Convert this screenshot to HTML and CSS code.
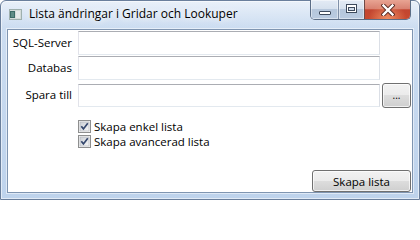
FILE: index.html
```html
<!DOCTYPE html>
<html lang="sv">
<head>
<meta charset="utf-8">
<title>Lista ändringar i Gridar och Lookuper</title>
<link rel="stylesheet" href="styles.css">
</head>
<body>
<div class="window">
  <div class="titlebar">
    <svg class="appicon" width="13" height="11" viewBox="0 0 13 11">
      <rect x="0" y="0" width="13" height="11" fill="#9fb0ae"/>
      <rect x="1" y="1" width="11" height="9" fill="#d4dcda"/>
      <rect x="1" y="2" width="5" height="7" fill="#3d6d67"/>
      <rect x="2" y="3" width="3" height="5" fill="#5f8d86"/>
      <rect x="7" y="2" width="4" height="7" fill="#e6ebea"/>
    </svg>
    <span class="title">Lista ändringar i Gridar och Lookuper</span>
    <div class="caption-buttons">
      <div class="cb cb-min"><span class="min-glyph"></span></div>
      <div class="cb cb-max"><span class="max-glyph"></span></div>
      <div class="cb cb-close">
        <svg width="14" height="12" viewBox="0 0 14 12">
          <path d="M2.5 1.5 L11.5 10.5 M11.5 1.5 L2.5 10.5" stroke="#5a2a22" stroke-width="4.2" stroke-linecap="square"/>
          <path d="M2.5 1.5 L11.5 10.5 M11.5 1.5 L2.5 10.5" stroke="#ffffff" stroke-width="2.4" stroke-linecap="square"/>
        </svg>
      </div>
    </div>
  </div>
  <div class="client">
    <div class="form">
      <div class="lbl r1">SQL-Server</div>
      <div class="input r1"></div>
      <div class="lbl r2">Databas</div>
      <div class="input r2"></div>
      <div class="lbl r3">Spara till</div>
      <div class="input r3"></div>
      <div class="btn browse r3">...</div>
    </div>
    <div class="checks">
      <div class="check">
        <svg class="box" width="13" height="13" viewBox="0 0 13 13">
          <defs>
            <linearGradient id="cg" x1="0" y1="0" x2="1" y2="1">
              <stop offset="0" stop-color="#cbcfd5"/>
              <stop offset="1" stop-color="#f7f7f7"/>
            </linearGradient>
          </defs>
          <rect x="0.5" y="0.5" width="12" height="12" fill="#f4f4f4" stroke="#8e8f8f"/>
          <rect x="2" y="2" width="9" height="9" fill="url(#cg)" stroke="#aeb3b9" stroke-width="0.6"/>
          <path d="M3.3 6.3 L5.4 8.9 L9.8 3.2" fill="none" stroke="#35486e" stroke-width="1.7"/>
        </svg>
        <span>Skapa enkel lista</span>
      </div>
      <div class="check">
        <svg class="box" width="13" height="13" viewBox="0 0 13 13">
          <rect x="0.5" y="0.5" width="12" height="12" fill="#f4f4f4" stroke="#8e8f8f"/>
          <rect x="2" y="2" width="9" height="9" fill="url(#cg)" stroke="#aeb3b9" stroke-width="0.6"/>
          <path d="M3.3 6.3 L5.4 8.9 L9.8 3.2" fill="none" stroke="#35486e" stroke-width="1.7"/>
        </svg>
        <span>Skapa avancerad lista</span>
      </div>
    </div>
    <div class="footer">
      <div class="btn action">Skapa lista</div>
    </div>
  </div>
</div>
</body>
</html>
```

FILE: styles.css
```css
* { box-sizing: border-box; }
html, body { margin: 0; padding: 0; }
body {
  width: 420px;
  height: 200px;
  overflow: hidden;
  background: #ffffff;
  font-family: "Segoe UI", "Open Sans", "Noto Sans", sans-serif;
  font-size: 11.5px;
  color: #000;
}
.window {
  width: 420px;
  height: 200px;
  border: 1px solid #6a7f9c;
  border-radius: 6px 6px 0 0;
  padding: 0 6px 6px 6px;
  display: flex;
  flex-direction: column;
  background:
    linear-gradient(to bottom, rgba(255,255,255,0.55), rgba(255,255,255,0) 26px),
    linear-gradient(to bottom, #cfdff2 0, #c4d7ee 60%, #bed3ec 100%);
  box-shadow: inset 0 0 0 1px rgba(255,255,255,0.55);
}
.titlebar {
  height: 28px;
  display: flex;
  align-items: flex-start;
  flex: none;
}
.appicon {
  margin: 8px 0 0 2px;
  flex: none;
}
.title {
  margin: 5px 0 0 7px;
  font-size: 12px;
  line-height: 16px;
  color: #000;
  text-shadow: 0 0 6px rgba(255,255,255,0.95), 0 0 10px rgba(255,255,255,0.8);
  white-space: nowrap;
}
.caption-buttons {
  margin: -1px 2px 0 auto;
  display: flex;
  height: 20px;
  border: 1px solid #5b6d86;
  border-top: none;
  border-radius: 0 0 5px 5px;
  overflow: hidden;
}
.cb {
  height: 19px;
  display: flex;
  align-items: center;
  justify-content: center;
  position: relative;
}
.cb-min, .cb-max {
  width: 27px;
  background: linear-gradient(to bottom, #e3ebf5 0, #d6e1ee 45%, #b6c7dc 50%, #b9cbe1 100%);
  box-shadow: inset 0 0 0 1px rgba(255,255,255,0.45);
}
.cb-min { border-right: 1px solid #7f90a8; width: 28px; }
.cb-max { width: 26px; border-right: 1px solid #6d4a48; }
.min-glyph {
  width: 12px;
  height: 4px;
  margin-top: 6px;
  background: #fff;
  border: 1px solid #3d4a5c;
  border-radius: 1px;
}
.max-glyph {
  width: 11px;
  height: 9px;
  margin-top: -2px;
  border: 1px solid #3d4a5c;
  box-shadow: inset 0 0 0 1px #fff, inset 0 2px 0 1px #fff;
  background: #3d4a5c;
  position: relative;
}
.max-glyph::after {
  content: "";
  position: absolute;
  left: 1px; top: 2px; right: 1px; bottom: 1px;
  background: #cfdbe9;
  border: 1px solid #3d4a5c;
}
.cb-close {
  width: 45px;
  background:
    radial-gradient(ellipse at 50% 100%, rgba(255,170,120,0.7) 0, rgba(255,170,120,0) 60%),
    linear-gradient(to bottom, #e8a493 0, #d88272 45%, #c24530 52%, #c7492f 100%);
}
.client {
  flex: 1;
  background: #fff;
  border: 1px solid #7f95b1;
  display: flex;
  flex-direction: column;
  box-shadow: 0 0 0 1px rgba(255,255,255,0.5);
}
.form {
  margin-top: 1px;
  display: grid;
  grid-template-columns: 70px 302px 31px;
  grid-template-rows: 24px 24px 25px;
  row-gap: 1px;
}
.r1 { grid-row: 1; }
.r2 { grid-row: 2; }
.r3 { grid-row: 3; }
.form .r3 { margin-top: 2px; }
.lbl {
  grid-column: 1;
  text-align: right;
  padding-right: 6px;
  line-height: 24px;
  white-space: nowrap;
}
.input {
  grid-column: 2;
  height: 24px;
  background: #fff;
  border: 1px solid;
  border-color: #abadb3 #dbdfe6 #e3e9ef #e2e3ea;
}
.form .input.r3 { margin-top: 3px; height: 23px; }
.btn {
  border: 1px solid #707070;
  border-radius: 3px;
  background: linear-gradient(to bottom, #f2f2f2 0, #ebebeb 50%, #dddddd 50%, #cfcfcf 100%);
  box-shadow: inset 0 0 0 1px rgba(255,255,255,0.7);
  display: flex;
  align-items: center;
  justify-content: center;
  color: #000;
}
.browse {
  grid-column: 3;
  margin-left: 2px;
  width: 29px;
  height: 25px;
  font-size: 10px;
  line-height: 1;
  padding-bottom: 2px;
}
.checks {
  margin-top: 13px;
  padding-left: 70px;
  display: flex;
  flex-direction: column;
}
.check {
  height: 15px;
  display: flex;
  align-items: center;
  white-space: nowrap;
}
.check .box { flex: none; margin-right: 3px; }
.footer {
  margin-top: auto;
  display: flex;
  justify-content: flex-end;
  padding-right: 1px;
}
.action {
  width: 99px;
  height: 22px;
}
```
